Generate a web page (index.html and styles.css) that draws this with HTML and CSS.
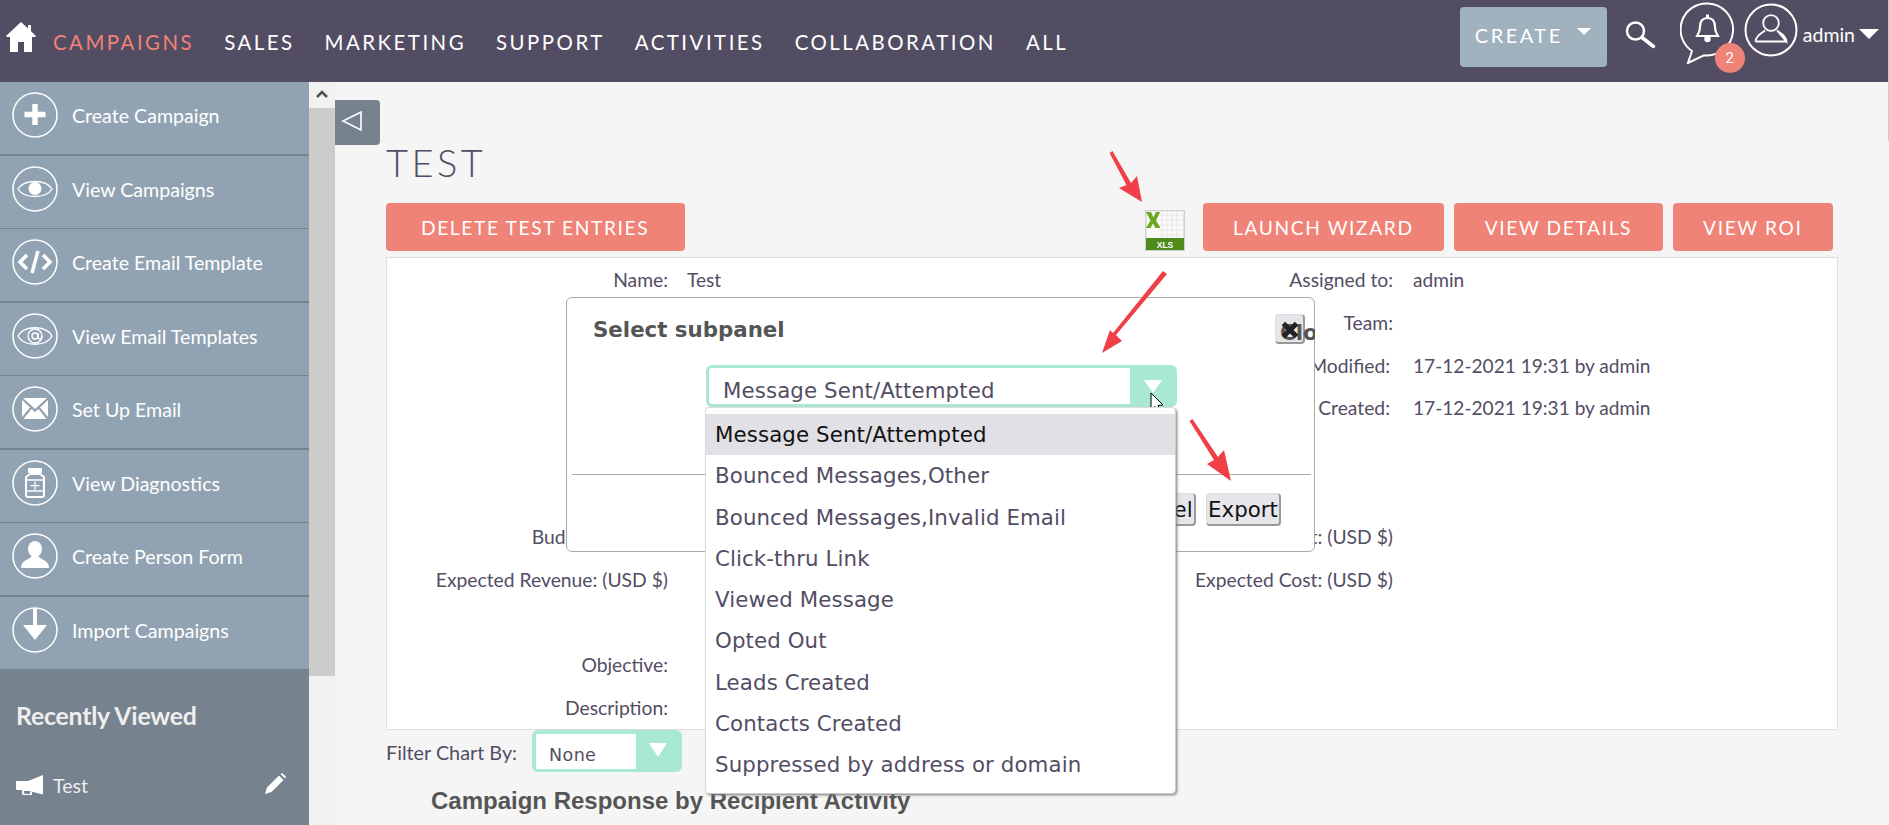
FILE: index.html
```html
<!DOCTYPE html>
<html lang="en">
<head>
<meta charset="utf-8">
<title>Test - Campaigns</title>
<link rel="stylesheet" href="styles.css">
</head>
<body>
<header class="topbar">
  <svg class="home" viewBox="0 0 30 30"><path d="M15 0 L22 6.500 V3 H25 V9.300 L30 14 L29 15 H26 V30 H18 V20 H12 V30 H4 V15 H1 L0 14 Z" fill="#fff"/></svg>
  <nav class="mainnav">
    <a class="active">CAMPAIGNS</a><a>SALES</a><a>MARKETING</a><a>SUPPORT</a><a>ACTIVITIES</a><a>COLLABORATION</a><a>ALL</a>
  </nav>
  <div class="create">CREATE<span class="create-caret"></span></div>
  <svg class="search" viewBox="0 0 31 29"><circle cx="10.500" cy="11" r="8.500" fill="none" stroke="#fff" stroke-width="2.500"/><path d="M17 17.500 L28.500 26.500" stroke="#fff" stroke-width="3.500" stroke-linecap="round"/></svg>
  <div class="bell">
    <svg viewBox="0 0 56 62"><path d="M28 1.500 A26 26 0 1 1 24 53.300 L8 61 L12 49 A26 26 0 0 1 28 1.500 Z" fill="none" stroke="#fff" stroke-width="2"/><path d="M27.500 16 C33 16 35 20 35 25 C35 30 37 32 38 34 H17 C18 32 20 30 20 25 C20 20 22 16 27.500 16 Z" fill="none" stroke="#fff" stroke-width="2.200"/><path d="M27.500 12.500 V16" stroke="#fff" stroke-width="3"/><circle cx="27.500" cy="37" r="3.200" fill="#fff"/></svg>
    <span class="badge">2</span>
  </div>
  <svg class="avatar" viewBox="0 0 54 54"><circle cx="27" cy="27" r="25.500" fill="none" stroke="#fff" stroke-width="2"/><circle cx="27" cy="20" r="7.800" fill="none" stroke="#fff" stroke-width="1.800"/><path d="M11.500 38.500 C12 32 18 30.500 21 27.500 M33 27.500 C36 30.500 42 32 42.500 38.500 Z M11.500 38.500 H42.500" fill="none" stroke="#fff" stroke-width="1.800"/></svg>
  <span class="user">admin</span><span class="user-caret"></span>
</header>

<div class="shell">
  <aside class="sidebar">
    <ul class="actions">
      <li><svg class="ico" viewBox="0 0 46 46"><circle cx="23" cy="23" r="22" class="ring"/><path d="M23 12 V33 M12.500 22.500 H33.500" stroke="#fff" stroke-width="5.500"/></svg><span>Create Campaign</span></li>
      <li><svg class="ico" viewBox="0 0 46 46"><circle cx="23" cy="23" r="22" class="ring"/><path d="M6 23 C12 13 34 13 40 23 C34 33 12 33 6 23 Z" class="line"/><circle cx="23" cy="22.500" r="6.500" fill="#fff"/></svg><span>View Campaigns</span></li>
      <li><svg class="ico" viewBox="0 0 46 46"><circle cx="23" cy="23" r="22" class="ring"/><path d="M15 16 L8 23 L15 30 M31 16 L38 23 L31 30" fill="none" stroke="#fff" stroke-width="3.500"/><path d="M26 12 L20 34" stroke="#fff" stroke-width="3.500"/></svg><span>Create Email Template</span></li>
      <li><svg class="ico" viewBox="0 0 46 46"><circle cx="23" cy="23" r="22" class="ring"/><path d="M6 23 C12 12 34 12 40 23 C34 34 12 34 6 23 Z" class="line"/><circle cx="23" cy="23" r="7" class="line"/><circle cx="23" cy="23" r="3" class="line"/><path d="M26 20 V25 C27 27 30 26 30 23" class="line"/></svg><span>View Email Templates</span></li>
      <li><svg class="ico" viewBox="0 0 46 46"><circle cx="23" cy="23" r="22" class="ring"/><path d="M11 12 H35 L23 23 Z M10 14 L18 21.500 L10 31 Z M36 14 V31 L28 21.500 Z M11.500 33 L19.500 23 L23 26 L26.500 23 L34.500 33 Z" fill="#fff"/></svg><span>Set Up Email</span></li>
      <li><svg class="ico" viewBox="0 0 46 46"><circle cx="23" cy="23" r="22" class="ring"/><path d="M16 8 H30 V13 H16 Z" fill="#fff"/><path d="M18 14 L14 17 V35 Q14 37 16 37 H30 Q32 37 32 35 V17 L28 14 Z" class="line2"/><path d="M14.500 20 H31.500 V31 H14.500 M23 21.500 V30 M18.500 25.700 H27.500" class="line"/></svg><span>View Diagnostics</span></li>
      <li><svg class="ico" viewBox="0 0 46 46"><circle cx="23" cy="23" r="22" class="ring"/><ellipse cx="23" cy="16" rx="7" ry="8" fill="#fff"/><path d="M9 35 C9 27 17 27 20 23 H26 C29 27 37 27 37 35 Z" fill="#fff"/></svg><span>Create Person Form</span></li>
      <li><svg class="ico" viewBox="0 0 46 46"><circle cx="23" cy="23" r="22" class="ring"/><path d="M23 1 V18" stroke="#fff" stroke-width="4"/><path d="M11 18 H35 L23 33 Z" fill="#fff"/></svg><span>Import Campaigns</span></li>
    </ul>
    <section class="recent">
      <h2>Recently Viewed</h2>
      <div class="recent-row">
        <svg class="horn" viewBox="0 0 27 20"><path d="M27 0 V19.500 L13 16 H8 V17.500 Q8 19 10 19 H14 V16.500 L16 17 V20 H7 Q6 20 6 18 V15 H1 Q0 15 0 14 V7 Q0 6 1 6 H12 Z" fill="#fff"/></svg>
        <span class="recent-name">Test</span>
        <svg class="pencil" viewBox="0 0 21 21"><path d="M0 21 L2 14.500 L14 2.500 L18.500 7 L6.500 19 Z M15.500 1 L17 0 L21 3.500 L20 5.500 Z" fill="#fff"/></svg>
      </div>
    </section>
  </aside>

  <div class="rail"><div class="rail-arrow"><svg viewBox="0 0 12 8"><path d="M1 7 L6 2 L11 7" fill="none" stroke="#505050" stroke-width="2.500"/></svg></div><div class="rail-thumb"></div></div>

  <main class="content">
    <div class="toggle"><svg viewBox="0 0 22 22"><path d="M20 2 V20 L2 11 Z" fill="none" stroke="#fff" stroke-width="1.600"/></svg></div>
    <h1 class="title">TEST</h1>
    <div class="buttons">
      <button class="btn btn-wide">DELETE TEST ENTRIES</button>
      <svg class="xls" viewBox="0 0 40 41">
        <rect x="0.500" y="0.500" width="39" height="40" fill="#e2e2e2" stroke="#d0d0d0"/>
        <rect x="2" y="1.500" width="36" height="27" fill="#fafafa"/>
        <path d="M14 5 H38 M14 10 H38 M14 15 H38 M14 20 H38 M14 25 H38 M17 1.500 V28 M22 1.500 V28 M27 1.500 V28 M32 1.500 V28" stroke="#e6e6e6" stroke-width="1"/>
        <path d="M1 2 H6 L8.500 7.500 L11 2 H15 L11 10.500 L15.500 18 H10.500 L8 13.500 L5.500 18 H1 L5.500 10.500 Z" fill="#6aa81e"/>
        <rect x="1" y="28" width="38" height="12" fill="#4f8a1c"/>
        <text x="20" y="37.500" class="xls-label">XLS</text>
      </svg>
      <button class="btn">LAUNCH WIZARD</button>
      <button class="btn">VIEW DETAILS</button>
      <button class="btn">VIEW ROI</button>
    </div>

    <section class="panel">
      <div class="lbl">Name:</div><div class="val">Test</div><div class="lbl">Assigned to:</div><div class="val val-r">admin</div>
      <div class="lbl"></div><div class="val"></div><div class="lbl">Team:</div><div class="val val-r"></div>
      <div class="lbl"></div><div class="val"></div><div class="lbl tight">Date Modified:</div><div class="val val-r">17-12-2021 19:31 by admin</div>
      <div class="lbl"></div><div class="val"></div><div class="lbl tight">Date Created:</div><div class="val val-r">17-12-2021 19:31 by admin</div>
      <div class="lbl"></div><div class="val"></div><div class="lbl"></div><div class="val val-r"></div>
      <div class="lbl"></div><div class="val"></div><div class="lbl"></div><div class="val val-r"></div>
      <div class="lbl">Budget: (USD $)</div><div class="val"></div><div class="lbl">Actual Cost: (USD $)</div><div class="val val-r"></div>
      <div class="lbl">Expected Revenue: (USD $)</div><div class="val"></div><div class="lbl">Expected Cost: (USD $)</div><div class="val val-r"></div>
      <div class="lbl"></div><div class="val"></div><div class="lbl"></div><div class="val val-r"></div>
      <div class="lbl">Objective:</div><div class="val"></div><div class="lbl"></div><div class="val val-r"></div>
      <div class="lbl">Description:</div><div class="val"></div><div class="lbl"></div><div class="val val-r"></div>
    </section>

    <div class="filter">
      <label class="filter-label">Filter Chart By:</label>
      <div class="filter-select"><span class="filter-value">None</span><span class="filter-arrow"></span></div>
    </div>
    <h3 class="chart-title">Campaign Response by Recipient Activity</h3>

    <div class="modal">
      <h4 class="modal-title">Select subpanel</h4>
      <div class="close-clip"><button class="close"><span class="close-text">Close</span><svg class="close-x" viewBox="0 0 20 20"><path d="M4 4 L16 16 M16 4 L4 16" stroke="#222" stroke-width="4.500"/></svg></button></div>
      <div class="combo">
        <div class="combo-box"><span class="combo-value">Message Sent/Attempted</span><span class="combo-arrow"></span></div>
        <ul class="menu">
          <li class="selected">Message Sent/Attempted</li>
          <li>Bounced Messages,Other</li>
          <li>Bounced Messages,Invalid Email</li>
          <li>Click-thru Link</li>
          <li>Viewed Message</li>
          <li>Opted Out</li>
          <li>Leads Created</li>
          <li>Contacts Created</li>
          <li>Suppressed by address or domain</li>
        </ul>
      </div>
      <hr class="modal-rule">
      <div class="modal-actions"><button class="mbtn mbtn-cancel">Cancel</button><button class="mbtn">Export</button></div>
    </div>
  </main>
</div>

<svg class="marks" viewBox="0 0 1889 825">
  <path d="M1109.500 153 L1112.500 151 L1131 183 L1137 176 L1142 202 L1119 188 L1126.500 185 Z" class="arrow"/>
  <path d="M1163 271 L1167 274 L1116 335 L1122 341 L1102 353 L1110 330 L1113 333 Z" class="arrow"/>
  <path d="M1189.500 421 L1192.500 419 L1218 457 L1224 450 L1231 481 L1207 464 L1214 460 Z" class="arrow"/>
  <path d="M1151 393 V410 L1155 406.500 L1158 413 L1161 411.500 L1158 405.500 L1163 405 Z" fill="#fff" stroke="#000" stroke-width="1"/>
</svg>
<div class="edge"></div>
</body>
</html>
```

FILE: styles.css
```css
* { box-sizing: border-box; }
html, body { margin: 0; padding: 0; height: 825px; overflow: hidden; }
body { position: relative; width: 1889px; background: #f5f5f5; font-family: Lato, "Liberation Sans", sans-serif; color: #534d64; }
ul { list-style: none; margin: 0; padding: 0; }
button { font: inherit; }

.topbar { height: 82px; background: #534d64; display: flex; align-items: flex-start; color: #fff; padding-right: 10px; }
.home { width: 30px; height: 30px; margin: 22px 17px 0 6px; flex: none; }
.mainnav { display: flex; gap: 30px; flex: 1; min-width: 0; padding-top: 30px; font-size: 20.4px; letter-spacing: 2.5px; line-height: 24px; }
.mainnav .active { color: #f08377; }
.create { width: 147px; height: 60px; margin-top: 7px; background: #a1b2bf; border-radius: 4px; padding: 16px 0 0 15px; font-size: 20px; letter-spacing: 2.5px; line-height: 24px; position: relative; flex: none; }
.create-caret { position: absolute; left: 117px; top: 21px; border: 7.500px solid transparent; border-top: 7px solid #fff; border-bottom: 0; }
.search { width: 31px; height: 29px; margin: 20px 0 0 18px; flex: none; }
.bell { position: relative; width: 56px; height: 62px; margin: 2px 0 0 24px; flex: none; }
.bell svg { width: 56px; height: 62px; display: block; }
.badge { position: absolute; left: 35px; top: 41px; width: 30px; height: 30px; border-radius: 50%; background: #f08377; color: #fff; font-size: 15px; line-height: 30px; text-align: center; font-family: Roboto, sans-serif; }
.avatar { width: 54px; height: 54px; margin: 3px 0 0 8px; flex: none; }
.user { margin: 23px 0 0 5px; font-size: 19.5px; line-height: 24px; flex: none; }
.user-caret { margin: 29px 0 0 4px; border: 10px solid transparent; border-top: 10px solid #fff; border-bottom: 0; flex: none; }

.shell { display: flex; height: 743px; }
.sidebar { width: 309px; flex: none; background: #76838e; color: #fff; }
.actions { background: #91a3b2; }
.actions li { display: flex; align-items: flex-start; height: 74px; padding: 10px 0 0 12px; border-bottom: 2px solid #76838e; font-size: 19.6px; }
.actions li:nth-child(even) { height: 73px; border-bottom-width: 1px; }
.actions li:last-child { height: 72px; border-bottom: 0; }
.actions span { margin: 12px 0 0 14px; line-height: 24px; }
.ico { width: 46px; height: 46px; flex: none; }
.ring { fill: none; stroke: #fff; stroke-width: 1.5; }
.line { fill: none; stroke: #fff; stroke-width: 1.3; }
.line2 { fill: none; stroke: #fff; stroke-width: 2; }

.recent { padding: 31px 16px 0; }
.recent h2 { margin: 0; font-size: 24.8px; font-weight: 700; line-height: 32px; color: #eee; letter-spacing: -0.2px; }
.recent-row { display: flex; align-items: center; margin-top: 41px; height: 24px; }
.horn { width: 27px; height: 20px; flex: none; margin-top: 0; }
.recent-name { margin-left: 10px; font-size: 19.6px; flex: 1; color: #eee; }
.pencil { width: 21px; height: 21px; margin-right: 7px; margin-top: -3px; }

.rail { width: 26px; flex: none; background: #f1f1f1; }
.rail-arrow { height: 26px; padding: 8px 7px 0; }
.rail-arrow svg { display: block; width: 12px; height: 8px; }
.rail-thumb { height: 568px; background: #ccc; }

.content { position: relative; flex: 1; padding: 18px 51px 0; min-width: 0; }
.toggle { width: 45px; height: 45px; margin-left: -51px; background: #76838e; border-radius: 0 4px 4px 0; padding: 10px 13px 10px 6px; }
.toggle svg { display: block; width: 22px; height: 22px; }
.title { margin: -6px 0 6px; height: 58px; font-size: 38px; font-weight: 300; letter-spacing: 3.5px; line-height: 46px; color: #534d64; }
.buttons { display: flex; align-items: stretch; height: 48px; padding-right: 5px; margin-bottom: 6px; }
.btn { border: 0; background: #f08377; color: #fff; border-radius: 4px; padding: 0 30.5px; margin-left: 10px; font-size: 19.2px; letter-spacing: 1.6px; flex: none; }
.btn-wide { padding: 0 36px 0 35px; margin: 0 auto 0 0; }
.xls { width: 40px; height: 41px; align-self: flex-end; margin-right: 8px; flex: none; }
.xls-label { font-family: "Liberation Sans", sans-serif; font-size: 8.500px; font-weight: 700; fill: #fff; text-anchor: middle; }

.panel { display: grid; grid-template-columns: 281px 406px 281px 1fr; grid-auto-rows: 42.8px; column-gap: 19px; height: 473px; background: #fff; border: 1px solid #ddd; font-size: 19.3px; line-height: 44px; }
.lbl { text-align: right; white-space: nowrap; }
.tight { padding-right: 3px; }
.val { white-space: nowrap; font-size: 19.1px; }
.val-r { padding-left: 1px; }

.filter { display: flex; align-items: flex-start; }
.filter-label { font-size: 19.8px; line-height: 44px; margin-right: 15px; height: 42px; }
.filter-select { width: 150px; height: 42px; background: #a8e8d4; border-radius: 6px; padding: 4px 46px 3px 4px; position: relative; }
.filter-value { display: block; height: 35px; background: #fff; padding-left: 13px; font-family: "DejaVu Sans", sans-serif; font-size: 17.5px; line-height: 42px; letter-spacing: 0.4px; overflow: hidden; }
.filter-arrow { position: absolute; left: 117px; top: 13px; border: 9.500px solid transparent; border-top: 14px solid #fff; border-bottom: 0; }
.chart-title { margin: 16px 0 0 45px; font-family: "Liberation Sans", sans-serif; font-size: 24px; font-weight: 700; line-height: 26px; color: #555; white-space: nowrap; }

.modal { position: absolute; left: 231px; top: 215px; width: 749px; height: 255px; background: #fff; border: 1px solid #aaa; border-radius: 6px; font-family: "DejaVu Sans", sans-serif; }
.modal-title { margin: 0; padding: 19px 0 0 26px; height: 67px; font-size: 21.33px; font-weight: 700; line-height: 26px; color: #555; }
.close-clip { position: absolute; left: 708px; top: 16px; width: 40px; height: 32px; overflow: hidden; }
.close { position: relative; display: block; width: 30px; height: 30px; padding: 0; background: #e5e5ea; border: 1px solid #ddd; border-right: 2px solid #999; border-bottom: 2px solid #999; border-radius: 4px; overflow: visible; text-align: left; }
.close-text { position: absolute; left: 4px; top: 6px; font-size: 21.33px; font-weight: 700; color: #555; line-height: 24px; white-space: nowrap; }
.close-x { position: absolute; left: 3px; top: 4px; width: 22px; height: 22px; }
.combo { position: relative; margin-left: 139px; width: 471px; }
.combo-box { height: 42px; background: #a8e8d4; border-radius: 6px; padding: 3px 47px 3px 3px; position: relative; }
.combo-value { display: block; height: 36px; background: #fff; border-radius: 3px 0 0 3px; padding-left: 14px; font-size: 21.33px; line-height: 46px; letter-spacing: 0.1px; color: #534d64; white-space: nowrap; overflow: hidden; }
.combo-arrow { position: absolute; left: 438px; top: 15px; border: 9.500px solid transparent; border-top: 13px solid #fff; border-bottom: 0; }
.menu { position: absolute; left: -1px; top: 42px; width: 470px; height: 386px; padding-top: 6px; background: #fff; border-radius: 4px; box-shadow: 1px 1px 0 #ccc, 2px 2px 3px #777; border: 1px solid #ddd; border-width: 1px 0 0 1px; z-index: 2; }
.menu li { height: 41.3px; padding-left: 9px; font-size: 21.33px; line-height: 42.8px; letter-spacing: 0.1px; white-space: nowrap; color: #534d64; }
.menu .selected { background: #e1e0e5; color: #111; }
.modal-rule { position: absolute; left: 5px; top: 176px; width: 739px; height: 1px; margin: 0; border: 0; background: #aaa; }
.modal-actions { position: absolute; top: 195px; right: 33px; display: flex; gap: 10px; }
.mbtn { width: 75px; height: 33px; padding: 0; background: #e5e5ea; border: 1px solid #ddd; border-right: 2px solid #999; border-bottom: 2px solid #999; border-radius: 4px; font-family: "DejaVu Sans", sans-serif; font-size: 21.33px; color: #111; white-space: nowrap; }
.mbtn-cancel { width: 78px; }

.marks { position: absolute; left: 0; top: 0; width: 1889px; height: 825px; pointer-events: none; }
.arrow { fill: #f13f47; }
.edge { position: absolute; right: 0; top: 0; width: 1px; height: 141px; background: #ccc; }
```
